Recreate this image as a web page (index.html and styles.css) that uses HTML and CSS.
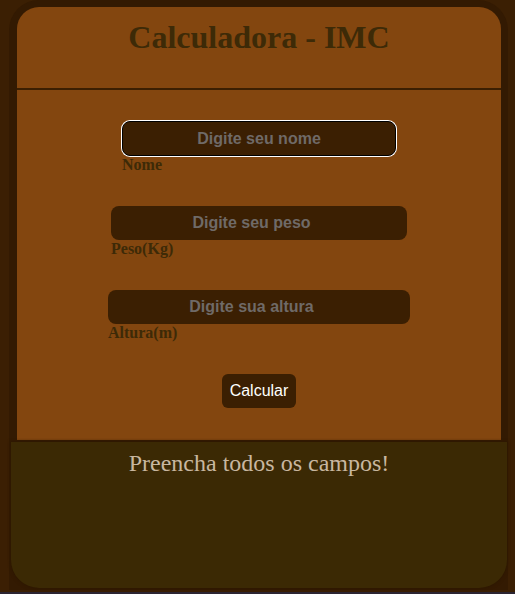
FILE: index.html
```html
<!DOCTYPE html>
<html lang="pt-BR">
<head>
<meta charset="utf-8">
<title>Calculadora - IMC</title>
<link rel="stylesheet" href="styles.css">
</head>
<body>
  <div class="app">
    <section class="calc">
      <header class="calc-header">
        <h1 class="calc-title">Calculadora - IMC</h1>
      </header>
      <form class="calc-form">
        <div class="field">
          <input class="field-input field-input--name is-focused" type="text" placeholder="Digite seu nome">
          <label class="field-label">Nome</label>
        </div>
        <div class="field">
          <input class="field-input field-input--weight" type="number" placeholder="Digite seu peso">
          <label class="field-label">Peso(Kg)</label>
        </div>
        <div class="field">
          <input class="field-input field-input--height" type="number" placeholder="Digite sua altura">
          <label class="field-label">Altura(m)</label>
        </div>
        <button class="calc-button" type="button">Calcular</button>
      </form>
    </section>
    <div class="result">
      <p class="result-text">Preencha todos os campos!</p>
    </div>
  </div>
</body>
</html>
```
FILE: styles.css
```css
html {
  background: #2b2431;
}

body {
  margin: 0;
  height: 592px;
  background: #3b1f03;
  font-family: "Liberation Serif", "Times New Roman", serif;
}

.app {
  margin-left: 9px;
  width: 499px;
  height: 590px;
  box-sizing: border-box;
  padding-top: 7px;
  background: #331a02;
  border-radius: 30px 30px 0 0;
}

.calc {
  margin: 0 7px 0 8px;
  height: 433px;
  background: #83460f;
  border-radius: 22px 22px 0 0;
  display: flex;
  flex-direction: column;
}

.calc-header {
  height: 81px;
  border-bottom: 2px solid #3b1f02;
}

.calc-title {
  margin: 0;
  padding-top: 12px;
  font-size: 32px;
  font-weight: bold;
  line-height: 37px;
  text-align: center;
  color: #3d2a07;
}

.calc-form {
  display: flex;
  flex-direction: column;
  align-items: center;
  gap: 32px;
  padding-top: 31px;
}

.field {
  display: flex;
  flex-direction: column;
  align-items: flex-start;
}

.field-input {
  box-sizing: border-box;
  height: 34px;
  border: none;
  border-radius: 8px;
  background: #3b1f02;
  font-family: "Liberation Sans", Arial, sans-serif;
  font-size: 16px;
  font-weight: bold;
  text-align: center;
  color: #c9c2bb;
  outline: none;
  padding: 0 8px;
}

.field-input::placeholder {
  color: #6f6a67;
  opacity: 1;
}

.field-input[type="number"] {
  padding-right: 23px;
}

.field-input::-webkit-inner-spin-button,
.field-input::-webkit-outer-spin-button {
  -webkit-appearance: none;
  margin: 0;
}

.field-input--name {
  width: 274px;
}

.field-input--weight {
  width: 296px;
}

.field-input--height {
  width: 302px;
}

.field-input.is-focused {
  height: 35px;
  border: 1px solid #000;
  box-shadow: 0 0 0 1px #fff;
}

.field-label {
  font-size: 16px;
  font-weight: bold;
  line-height: 18px;
  color: #3d2a07;
}

.calc-button {
  width: 74px;
  height: 34px;
  border: none;
  border-radius: 6px;
  background: #3b1f02;
  color: #fff;
  font-family: "Liberation Sans", Arial, sans-serif;
  font-size: 16px;
  padding: 0;
}

.result {
  margin: 2px 1px 0 2px;
  height: 146px;
  box-sizing: border-box;
  padding-top: 8px;
  background: #3b2904;
  border-radius: 0 0 28px 28px;
  box-shadow: 0 0 3px 1px #2e1802;
}

.result-text {
  margin: 0;
  font-size: 24px;
  text-align: center;
  color: #c8b7a0;
}
```
